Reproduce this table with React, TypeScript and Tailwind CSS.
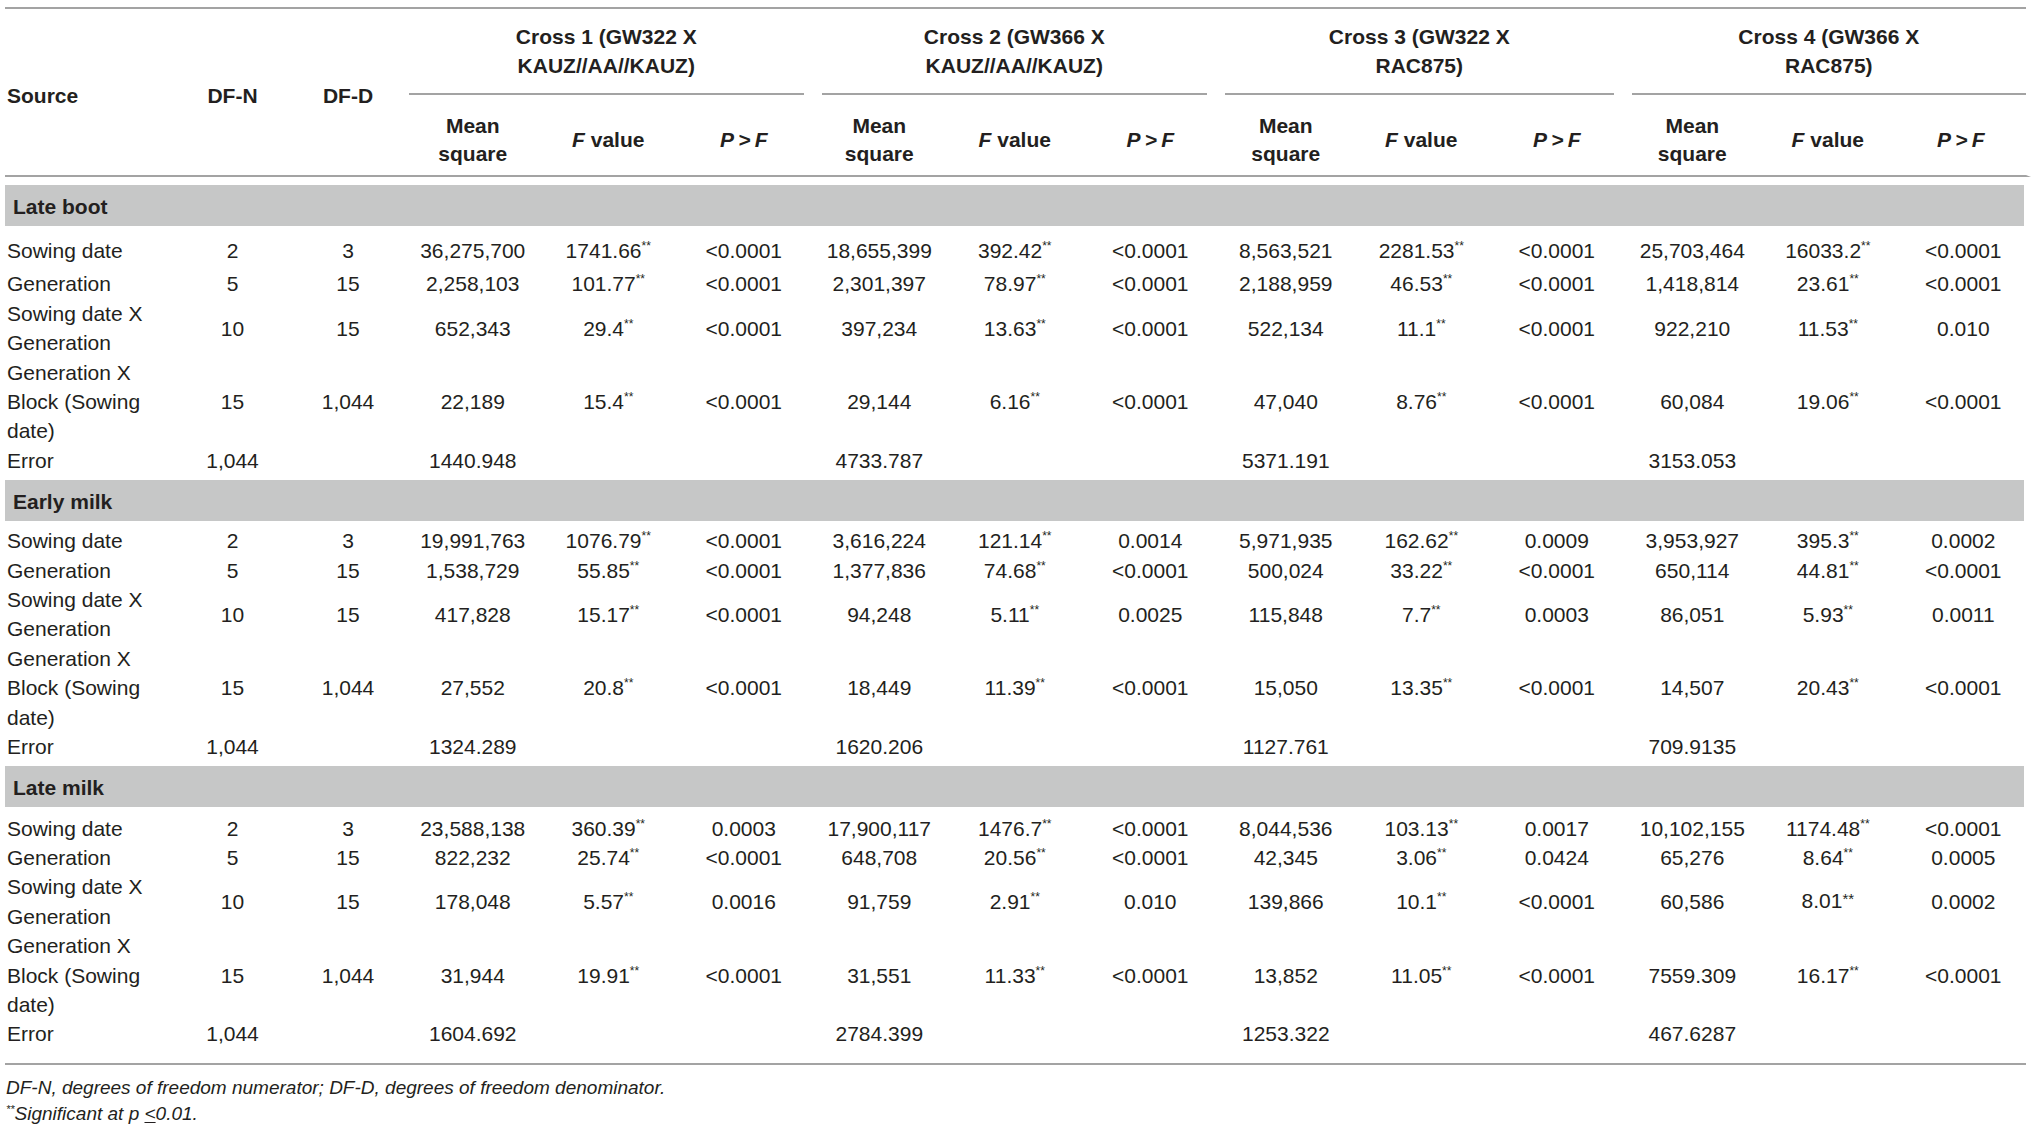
const crosses = [
  ['Cross 1 (GW322 X', 'KAUZ//AA//KAUZ)'],
  ['Cross 2 (GW366 X', 'KAUZ//AA//KAUZ)'],
  ['Cross 3 (GW322 X', 'RAC875)'],
  ['Cross 4 (GW366 X', 'RAC875)'],
]

// inset of the rule under each cross heading
const crossPad = ['pl-[4px] pr-[8px]', 'pl-[10px] pr-[11px]', 'pl-[7px] pr-[11px]', 'pl-[7px] pr-[5px]']

type Row = { source: string[]; dfn: string; dfd: string; cells: string[] }
type Section = { title: string; rows: Row[] }

const sections: Section[] = [
  {
    title: 'Late boot',
    rows: [
      { source: ['Sowing date'], dfn: '2', dfd: '3', cells: ['36,275,700', '1741.66**', '<0.0001', '18,655,399', '392.42**', '<0.0001', '8,563,521', '2281.53**', '<0.0001', '25,703,464', '16033.2**', '<0.0001'] },
      { source: ['Generation'], dfn: '5', dfd: '15', cells: ['2,258,103', '101.77**', '<0.0001', '2,301,397', '78.97**', '<0.0001', '2,188,959', '46.53**', '<0.0001', '1,418,814', '23.61**', '<0.0001'] },
      { source: ['Sowing date X', 'Generation'], dfn: '10', dfd: '15', cells: ['652,343', '29.4**', '<0.0001', '397,234', '13.63**', '<0.0001', '522,134', '11.1**', '<0.0001', '922,210', '11.53**', '0.010'] },
      { source: ['Generation X', 'Block (Sowing', 'date)'], dfn: '15', dfd: '1,044', cells: ['22,189', '15.4**', '<0.0001', '29,144', '6.16**', '<0.0001', '47,040', '8.76**', '<0.0001', '60,084', '19.06**', '<0.0001'] },
      { source: ['Error'], dfn: '1,044', dfd: '', cells: ['1440.948', '', '', '4733.787', '', '', '5371.191', '', '', '3153.053', '', ''] },
    ],
  },
  {
    title: 'Early milk',
    rows: [
      { source: ['Sowing date'], dfn: '2', dfd: '3', cells: ['19,991,763', '1076.79**', '<0.0001', '3,616,224', '121.14**', '0.0014', '5,971,935', '162.62**', '0.0009', '3,953,927', '395.3**', '0.0002'] },
      { source: ['Generation'], dfn: '5', dfd: '15', cells: ['1,538,729', '55.85**', '<0.0001', '1,377,836', '74.68**', '<0.0001', '500,024', '33.22**', '<0.0001', '650,114', '44.81**', '<0.0001'] },
      { source: ['Sowing date X', 'Generation'], dfn: '10', dfd: '15', cells: ['417,828', '15.17**', '<0.0001', '94,248', '5.11**', '0.0025', '115,848', '7.7**', '0.0003', '86,051', '5.93**', '0.0011'] },
      { source: ['Generation X', 'Block (Sowing', 'date)'], dfn: '15', dfd: '1,044', cells: ['27,552', '20.8**', '<0.0001', '18,449', '11.39**', '<0.0001', '15,050', '13.35**', '<0.0001', '14,507', '20.43**', '<0.0001'] },
      { source: ['Error'], dfn: '1,044', dfd: '', cells: ['1324.289', '', '', '1620.206', '', '', '1127.761', '', '', '709.9135', '', ''] },
    ],
  },
  {
    title: 'Late milk',
    rows: [
      { source: ['Sowing date'], dfn: '2', dfd: '3', cells: ['23,588,138', '360.39**', '0.0003', '17,900,117', '1476.7**', '<0.0001', '8,044,536', '103.13**', '0.0017', '10,102,155', '1174.48**', '<0.0001'] },
      { source: ['Generation'], dfn: '5', dfd: '15', cells: ['822,232', '25.74**', '<0.0001', '648,708', '20.56**', '<0.0001', '42,345', '3.06**', '0.0424', '65,276', '8.64**', '0.0005'] },
      { source: ['Sowing date X', 'Generation'], dfn: '10', dfd: '15', cells: ['178,048', '5.57**', '0.0016', '91,759', '2.91**', '0.010', '139,866', '10.1**', '<0.0001', '60,586', '8.01++', '0.0002'] },
      { source: ['Generation X', 'Block (Sowing', 'date)'], dfn: '15', dfd: '1,044', cells: ['31,944', '19.91**', '<0.0001', '31,551', '11.33**', '<0.0001', '13,852', '11.05**', '<0.0001', '7559.309', '16.17**', '<0.0001'] },
      { source: ['Error'], dfn: '1,044', dfd: '', cells: ['1604.692', '', '', '2784.399', '', '', '1253.322', '', '', '467.6287', '', ''] },
    ],
  },
]

// row padding per section: first row / error row
const firstPad = ['pt-[10px] pb-[4px]', 'pt-[5px]', 'pt-[7px]']
const lastPad = ['pb-[5px]', 'pb-[4px]', 'pb-[14px]']

// '**' -> small raised stars, '++' -> stars set at text size
function Val({ v }: { v: string }) {
  if (v.endsWith('**')) {
    return (
      <>
        {v.slice(0, -2)}
        <sup className="text-[12px] top-[-8px]">**</sup>
      </>
    )
  }
  if (v.endsWith('++')) {
    return (
      <>
        {v.slice(0, -2)}
        <span className="text-[15px] relative top-[-4px]">**</span>
      </>
    )
  }
  return <>{v}</>
}

export default function App() {
  return (
    <div className="min-h-screen bg-white text-[#231f20] font-['Liberation_Sans',Arial,sans-serif] text-[21px] pt-[7px] pl-[5px]">
      <div className="w-[2021px] border-y-2 border-[#a3a3a3]">
        <table className="w-[2026px] table-fixed border-separate border-spacing-0">
          <colgroup>
            <col className="w-[169px]" />
            <col className="w-[117px]" />
            <col className="w-[114px]" />
            {Array.from({ length: 12 }).map((_, i) => (
              <col key={i} className="w-[135.5px]" />
            ))}
          </colgroup>
          <thead>
            <tr>
              <th rowSpan={2} className="text-left font-bold align-middle pl-[2px] pt-[8px] border-b-2 border-[#a3a3a3]">
                Source
              </th>
              <th rowSpan={2} className="text-center font-bold align-middle pt-[8px] border-b-2 border-[#a3a3a3]">
                DF-N
              </th>
              <th rowSpan={2} className="text-center font-bold align-middle pt-[8px] border-b-2 border-[#a3a3a3]">
                DF-D
              </th>
              {crosses.map((c, i) => (
                <th key={i} colSpan={3} className={`p-0 ${crossPad[i]}`}>
                  <div className="border-b-2 border-[#a3a3a3] pt-[13px] pb-[13px] leading-[29px] text-center font-bold">
                    {c[0]}
                    <br />
                    {c[1]}
                  </div>
                </th>
              ))}
            </tr>
            <tr>
              {crosses.map((_, i) => [
                <th key={`m${i}`} className="font-bold text-center leading-[28px] pt-[17px] pb-[7px] border-b-2 border-[#a3a3a3]">
                  Mean
                  <br />
                  square
                </th>,
                <th key={`f${i}`} className="font-bold text-center leading-[28px] pt-[17px] pb-[7px] border-b-2 border-[#a3a3a3]">
                  <i>F</i> value
                </th>,
                <th
                  key={`p${i}`}
                  className={`font-bold italic text-center leading-[28px] pt-[17px] pb-[7px] border-b-2 border-[#a3a3a3] ${i === 3 ? 'border-r-[5px] border-r-white' : ''}`}
                >
                  P{'\u2009'}&gt;{'\u2009'}F
                </th>,
              ])}
            </tr>
          </thead>
          <tbody className="leading-[29.4px]">
            <tr>
              <td colSpan={15} className="h-[8px] p-0" />
            </tr>
            {sections.map((s, si) => [
              <tr key={`band${si}`}>
                <td colSpan={15} className="bg-[#c6c7c7] bg-clip-padding border-r-[7px] border-white font-bold pl-[8px] pt-[7px] pb-[4px] leading-[30px]">
                  {s.title}
                </td>
              </tr>,
              ...s.rows.map((r, ri) => {
                let pad = ''
                if (ri === 0) pad = firstPad[si]
                if (ri === s.rows.length - 1) pad = lastPad[si]
                return (
                  <tr key={`${si}-${ri}`}>
                    <td className={`pl-[2px] align-middle whitespace-nowrap ${pad}`}>
                      {r.source.map((line, li) => (
                        <div key={li}>{line}</div>
                      ))}
                    </td>
                    <td className={`text-center align-middle ${pad}`}>{r.dfn}</td>
                    <td className={`text-center align-middle ${pad}`}>{r.dfd}</td>
                    {r.cells.map((v, ci) => (
                      <td key={ci} className={`text-center align-middle whitespace-nowrap ${pad}`}>
                        <Val v={v} />
                      </td>
                    ))}
                  </tr>
                )
              }),
            ])}
          </tbody>
        </table>
      </div>
      <div className="italic text-[19px] leading-[26px] pt-[10px] pl-[1px]">
        <p>DF-N, degrees of freedom numerator; DF-D, degrees of freedom denominator.</p>
        <p>
          <sup className="text-[11px] top-[-7px]">**</sup>Significant at p <span className="underline underline-offset-2">&lt;</span>0.01.
        </p>
      </div>
    </div>
  )
}
